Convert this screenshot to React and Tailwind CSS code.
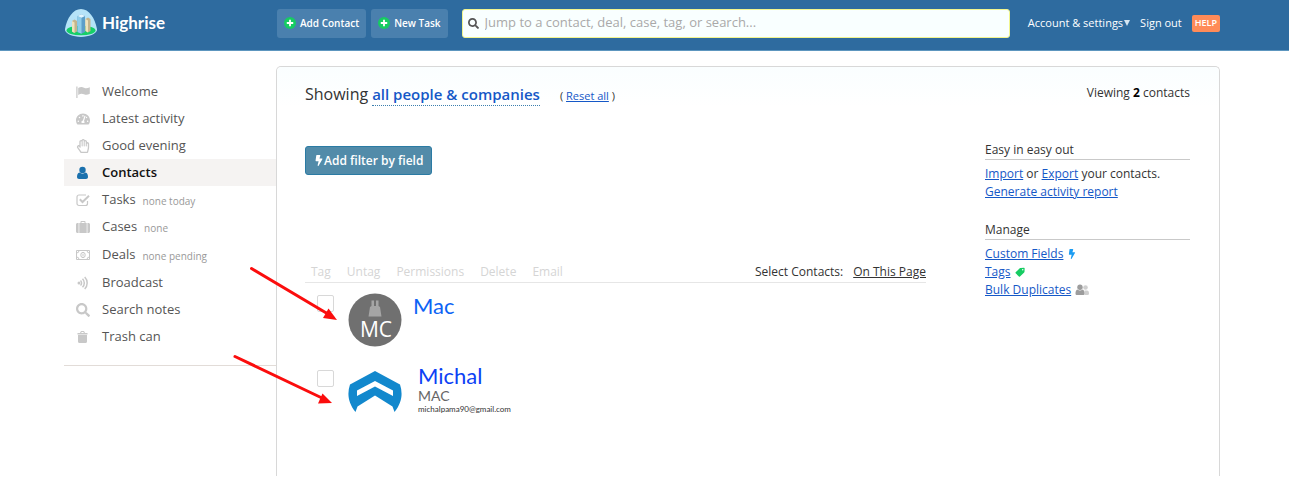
import React, { useState } from "react";
import {
  FaBolt,
  FaRegHandPaper,
  FaSearch,
  FaTachometerAlt,
} from "react-icons/fa";

const FlagIcon = ({ className }) => (
  <svg viewBox="0 0 14 14" className={className} fill="currentColor">
    <path d="M.3 1.500h1.200V13H.3z" />
    <path d="M2.200 3C4.500 1.700 6.200 1.800 8 2.700c1.900.9 3.600.6 5.800-.5v6.600c-2.200 1.200-3.900 1.300-5.800.5-1.800-.8-3.500-.8-5.800.6z" />
  </svg>
);

const UserIcon = ({ className }) => (
  <svg viewBox="0 0 14 14" className={className} fill="currentColor">
    <circle cx="6.500" cy="4" r="3.200" />
    <path d="M3.500 6.500c1.800 1.500 4.200 1.500 6 0C11.300 7 12 8.700 12 11c0 1.300-.8 2-2 2H3c-1.200 0-2-.7-2-2 0-2.300.7-4 2.500-4.500z" />
  </svg>
);

const TaskIcon = ({ className }) => (
  <svg viewBox="0 0 14 14" className={className} fill="none" stroke="currentColor">
    <path d="M11.500 8v2.500a2 2 0 0 1-2 2h-6.500a2 2 0 0 1-2-2V4a2 2 0 0 1 2-2h7" strokeWidth="1.200" />
    <path d="M3.800 6.300l2.700 2.700L13 2.800" strokeWidth="2" />
  </svg>
);

const SuitcaseIcon = ({ className }) => (
  <svg viewBox="0 0 14 14" className={className} fill="currentColor">
    <path d="M4.500 3V2c0-.6.400-1 1-1h3c.6 0 1 .4 1 1v1h1.200v10H3.300V3zm1 0h3V2h-3z" />
    <path d="M2.600 3v10H1.500C.7 13 0 12.300 0 11.500v-7C0 3.700.7 3 1.500 3zM11.400 3v10h1.100c.8 0 1.500-.7 1.500-1.500v-7c0-.8-.7-1.500-1.500-1.500z" />
  </svg>
);

const MoneyIcon = ({ className }) => (
  <svg viewBox="0 0 14 14" className={className} fill="none" stroke="currentColor">
    <path d="M.5 2.500h13v9H.5z" />
    <path d="M.5 5A2.500 2.500 0 0 0 3 2.500M11 2.500A2.500 2.500 0 0 0 13.500 5M.5 9A2.500 2.500 0 0 1 3 11.500M11 11.500A2.500 2.500 0 0 1 13.500 9" />
    <ellipse cx="7" cy="7" rx="2.200" ry="2.700" />
    <path d="M7 5.500v3" />
  </svg>
);

const BroadcastIcon = ({ className }) => (
  <svg viewBox="0 0 14 14" className={className} fill="none" stroke="currentColor">
    <circle cx="3" cy="7" r="1.500" fill="currentColor" stroke="none" />
    <path d="M4.500 4.500c1.400 1.400 1.400 3.600 0 5M6.500 2.700c2.400 2.400 2.400 6.200 0 8.600M8.700 1c3.300 3.400 3.300 8.600 0 12" strokeWidth="1.500" />
  </svg>
);

const TrashIcon = ({ className }) => (
  <svg viewBox="0 0 14 14" className={className} fill="currentColor">
    <path d="M1.500 3H4l.7-1.500c.1-.3.400-.5.700-.5h2.200c.3 0 .6.200.7.500L9 3h2.500v1.500h-10zM5.200 3h2.600l-.4-.9H5.600z" />
    <path d="M2 5h9v6.500c0 .8-.6 1.500-1.400 1.500H3.400C2.600 13 2 12.300 2 11.500z" />
  </svg>
);

const TagIcon = ({ className }) => (
  <svg viewBox="0 0 12 12" className={className} fill="currentColor">
    <path
      d="M6.500 1.200L10.800 1c.5 0 .8.300.8.8l-.2 4c0 .3-.2.600-.4.800L6 11.300c-.4.400-.9.400-1.300 0L.8 7.600c-.4-.4-.4-.9 0-1.300l4.900-4.800c.2-.2.500-.3.800-.3zM9.300 2.400a.9.900 0 1 0 0 1.800.9.900 0 0 0 0-1.800z"
      fillRule="evenodd"
    />
  </svg>
);

const PeopleIcon = ({ className }) => (
  <svg viewBox="0 0 14 12" className={className}>
    <g fill="#cfcfcf">
      <circle cx="10.500" cy="3.500" r="2.300" />
      <path d="M9.500 6.500h2.500c1.400 0 2 1.200 2 3 0 .8-.5 1.500-1.300 1.500H9.500z" />
    </g>
    <g fill="#9c9c9c">
      <circle cx="5" cy="3.200" r="2.700" />
      <path d="M2.500 5.500c1.500 1.300 3.500 1.300 5 0C9 6 9.500 7.500 9.500 9.500c0 1-.6 1.500-1.500 1.500H2c-.9 0-1.500-.5-1.500-1.500 0-2 .5-3.500 2-4z" />
    </g>
  </svg>
);

const PlusIcon = () => (
  <svg viewBox="0 0 12 12" className="h-3 w-3">
    <circle cx="6" cy="6" r="6" fill="#16cc62" />
    <path d="M6 2.800v6.400M2.800 6h6.400" stroke="#fff" strokeWidth="1.800" />
  </svg>
);

const navItems = [
  { label: "Welcome", icon: FlagIcon },
  { label: "Latest activity", icon: FaTachometerAlt },
  { label: "Good evening", icon: FaRegHandPaper },
  { label: "Contacts", icon: UserIcon, active: true },
  { label: "Tasks", icon: TaskIcon, note: "none today" },
  { label: "Cases", icon: SuitcaseIcon, note: "none", tall: true },
  { label: "Deals", icon: MoneyIcon, note: "none pending", tall: true },
  { label: "Broadcast", icon: BroadcastIcon },
  { label: "Search notes", icon: FaSearch },
  { label: "Trash can", icon: TrashIcon },
];

const bulkActions = ["Tag", "Untag", "Permissions", "Delete", "Email"];

const Logo = () => (
  <svg viewBox="0 0 32 28" className="h-7 w-8 shrink-0">
    <path d="M16 0C8 0 2 9 0 20c-1 4 7 8 16 8s17-4 16-8C30 9 24 0 16 0z" fill="#b5e3f8" />
    <ellipse cx="16" cy="21.500" rx="14.500" ry="4.800" fill="#16cf68" />
    <path d="M7 12l2.500-1.500L12 12v10.500l-2.500 1.500L7 22.500z" fill="#c5b58c" />
    <path d="M7 12l2.500 1.500v10.500L7 22.500z" fill="#efe3bd" />
    <path d="M20.500 10l2.500-1.500 2.500 1.500v12L23 23.500 20.500 22z" fill="#c5b58c" />
    <path d="M20.500 10l2.500 1.500v12L20.500 22z" fill="#efe3bd" />
    <path d="M12.500 7l4-1.800L20 7v16l-3.500 1.800-4-1.800z" fill="#5d9fc9" />
    <path d="M12.500 7l4 1.800v16l-4-1.800z" fill="#8fcdea" />
    <path d="M12.500 7l4-1.800L20 7l-3.500 1.800z" fill="#e3f6ff" />
  </svg>
);

const MacAvatar = () => (
  <svg viewBox="0 0 54 54" className="h-[54px] w-[54px] shrink-0">
    <circle cx="27" cy="27" r="26.500" fill="#707070" />
    <path d="M23.500 7.500H26V13h2V7.500h2.500V13l1.500 1 1.500 9.500h-13L22 14l1.500-1z" fill="#a5a5a5" />
    <text x="28" y="44" textAnchor="middle" fill="#fff" fontSize="21" fontFamily="Open Sans, sans-serif">
      MC
    </text>
  </svg>
);

const MichalAvatar = () => (
  <svg viewBox="0 0 54 44" className="h-11 w-[54px] shrink-0">
    <path
      d="M27 1L52 14.500c3 9 2 18-5.500 27.500l-2-5.500L27 25.500 9.500 36.500l-2 5.500C0 32.500-1 23.500 2 14.500z"
      fill="#1288cd"
    />
    <path d="M27 11l18 9.500V26L27 16.500 9 26v-5.500z" fill="#fff" />
  </svg>
);

const TopBar = () => {
  const [query, setQuery] = useState("");

  return (
    <header className="flex h-[51px] items-center border-b border-[#5d96bf] bg-[#2e6b9f] pb-1 pl-[65px] pr-[69px] text-white">
      <a href="#home" className="flex w-[212px] shrink-0 items-center gap-[5px]">
        <Logo />
        <span className="font-[Lato,sans-serif] text-[17px] font-bold leading-6">Highrise</span>
      </a>
      <div className="flex shrink-0 gap-[5px] text-[10px] font-semibold">
        <button className="flex h-[29px] items-center gap-1 rounded-[3px] bg-[#4a80ae] px-[7px]">
          <PlusIcon />
          Add Contact
        </button>
        <button className="flex h-[29px] items-center gap-1 rounded-[3px] bg-[#4a80ae] px-[7px]">
          <PlusIcon />
          New Task
        </button>
      </div>
      <div className="ml-3.5 flex h-[29px] min-w-0 flex-1 items-center gap-1.5 rounded-[3px] border border-[#f1f58f] bg-[#f9ffff] px-[5px]">
        <FaSearch className="h-[11px] w-[11px] shrink-0 text-[#555]" />
        <input
          type="text"
          aria-label="Search"
          value={query}
          onChange={(e) => setQuery(e.target.value)}
          placeholder="Jump to a contact, deal, case, tag, or search..."
          className="w-full bg-transparent text-[13px] text-gray-700 outline-none placeholder:text-[#a9a9a9]"
        />
      </div>
      <nav className="ml-[18px] flex shrink-0 items-center gap-2.5 text-[11px]">
        <button className="flex items-center gap-px">
          Account &amp; settings
          <svg viewBox="0 0 6 6" className="h-1.5 w-1.5" fill="#d5e5f1">
            <path d="M0 0h6L3 6z" />
          </svg>
        </button>
        <a href="#signout">Sign out</a>
        <a href="#help" className="flex h-[17px] items-center rounded-xs bg-[#ff8b58] px-[3px] text-[9px] font-semibold">
          HELP
        </a>
      </nav>
    </header>
  );
};

const Sidebar = () => (
  <nav className="w-[212px] shrink-0 pt-3">
    <ul className="border-b border-[#e2dcd8] pb-[15px]">
      {navItems.map(({ label, icon: Icon, note, active, tall }) => (
        <li key={label} className={tall ? "h-7" : "h-[27px]"}>
          <a
            href={`#${label}`}
            className={`flex h-full items-center pl-3 text-[13px] ${
              active ? "bg-[#f5f3f2] font-semibold text-[#111]" : "text-[#555]"
            }`}
          >
            <Icon className={`mr-3 h-3.5 w-3.5 shrink-0 ${active ? "text-[#1a70ad]" : "text-[#c8c8c8]"}`} />
            {label}
            {note && <span className="ml-[7px] pt-[3px] text-[10px] text-[#999]">{note}</span>}
          </a>
        </li>
      ))}
    </ul>
  </nav>
);

const SideLinks = () => (
  <aside className="w-[205px] shrink-0 text-[12px] leading-[18px] text-[#333]">
    <h2 className="border-b border-[#c9c9c9]">Easy in easy out</h2>
    <p className="mt-[5px]">
      <a href="#import" className="text-[#1558c7] underline">Import</a> or{" "}
      <a href="#export" className="text-[#1558c7] underline">Export</a> your contacts.
    </p>
    <p>
      <a href="#report" className="text-[#1558c7] underline">Generate activity report</a>
    </p>
    <h2 className="mt-5 border-b border-[#c9c9c9]">Manage</h2>
    <ul className="mt-[5px]">
      <li className="flex items-center gap-1">
        <a href="#fields" className="text-[#1558c7] underline">Custom Fields</a>
        <FaBolt className="h-2.5 w-2.5 text-[#1b9cf2]" />
      </li>
      <li className="flex items-center gap-1">
        <a href="#tags" className="text-[#1558c7] underline">Tags</a>
        <TagIcon className="h-2.5 w-2.5 text-[#16cc62]" />
      </li>
      <li className="flex items-center gap-1">
        <a href="#duplicates" className="text-[#1558c7] underline">Bulk Duplicates</a>
        <PeopleIcon className="h-3 w-3.5" />
      </li>
    </ul>
  </aside>
);

const Contacts = () => (
  <section className="min-w-0 flex-1 pt-[5px]">
    <button className="flex h-[29px] items-center rounded-[3px] border border-[#2b7ba4] bg-[#528ba9] px-2 text-[12px] font-semibold text-white">
      <FaBolt className="h-[11px] w-2.5" />
      Add filter by field
    </button>
    <div className="mt-[86px] flex items-center border-b border-[#e6e6e6] pl-1.5 text-[12px] leading-[21px]">
      <div className="flex gap-4 text-[#d5d5d5]">
        {bulkActions.map((action) => (
          <button key={action} disabled>
            {action}
          </button>
        ))}
      </div>
      <div className="ml-auto flex gap-2.5 text-[#333]">
        <span>Select Contacts:</span>
        <a href="#page" className="underline">On This Page</a>
      </div>
    </div>
    <ul className="pl-3 pt-2.5 font-[Lato,sans-serif]">
      <li className="flex h-[77px] items-start">
        <input
          type="checkbox"
          aria-label="Select Mac"
          className="mt-0.5 h-[17px] w-[17px] appearance-none rounded-xs border border-[#d8d8d8]"
        />
        <div className="ml-3.5 flex gap-[11px]">
          <MacAvatar />
          <a href="#mac" className="text-[22px] leading-[26px] text-[#0d63f5]">Mac</a>
        </div>
      </li>
      <li className="flex h-[77px] items-start">
        <input
          type="checkbox"
          aria-label="Select Michal"
          className="h-[17px] w-[17px] appearance-none rounded-xs border border-[#d8d8d8]"
        />
        <div className="ml-3.5 flex gap-4">
          <MichalAvatar />
          <div className="-mt-1.5">
            <a href="#michal" className="block text-[22px] leading-6 text-[#0d41f5]">Michal</a>
            <p className="text-[14px] leading-4 text-[#666]">MAC</p>
            <p className="text-[8px] leading-[10px] text-[#333]">michalpama90@gmail.com</p>
          </div>
        </div>
      </li>
    </ul>
  </section>
);

const Arrows = () => (
  <svg viewBox="0 0 110 140" className="pointer-events-none absolute left-[232px] top-[266px] h-[140px] w-[110px]">
    <g stroke="#fb0d0d" strokeWidth="3" strokeLinecap="round">
      <path d="M19.500 2.500L96 48" />
      <path d="M3 90.500L90 132" />
    </g>
    <g fill="#fb0d0d">
      <path d="M105 54L91 52l5.500-9.500z" />
      <path d="M100 137l-14 .5 4.500-10z" />
    </g>
  </svg>
);

const App = () => {
  return (
    <div className="relative bg-white font-[Open_Sans,sans-serif]">
      <TopBar />
      <div className="flex items-start pl-16 pr-[69px] pt-[15px]">
        <Sidebar />
        <main className="min-w-0 flex-1 rounded-t-[5px] border border-b-0 border-[#d8d8d8] pb-[29px]">
          <div className="flex items-start justify-between rounded-t-[5px] bg-linear-to-b from-[#fafeff] to-white pl-7 pr-[29px] pt-4 text-[#333]">
            <h1 className="flex items-baseline text-[16px] leading-[22px]">
              Showing
              <button className="ml-1 border-b border-dotted border-[#3b7fae] text-[15px] font-semibold text-[#1558c7]">
                all people &amp; companies
              </button>
              <span className="ml-5 text-[11px]">
                ( <a href="#reset" className="text-[#1558c7] underline">Reset all</a> )
              </span>
            </h1>
            <p className="text-[12px] leading-5">
              Viewing <b className="text-black">2</b> contacts
            </p>
          </div>
          <div className="flex gap-[59px] pl-7 pr-[29px] pt-[34px]">
            <Contacts />
            <SideLinks />
          </div>
        </main>
      </div>
      <Arrows />
    </div>
  );
};

export default App;
